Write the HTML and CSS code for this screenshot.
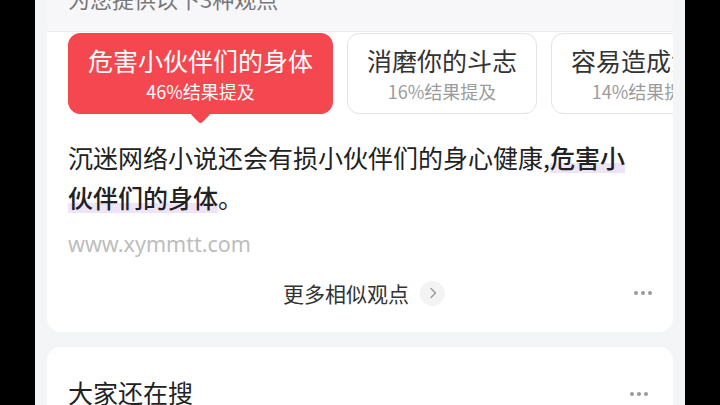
FILE: index.html
```html
<!DOCTYPE html>
<html lang="zh-CN">
<head>
    <meta charset="UTF-8">
    <meta name="viewport" content="width=device-width, initial-scale=1.0">
    <title>观点</title>
    <link rel="stylesheet" href="styles.css">
</head>
<body>
    <div class="phone">
        <div class="card answer">
            <div class="card-head">为您提供以下3种观点</div>
            <div class="tabs">
                <div class="tab active">
                    <div class="tab-title">危害小伙伴们的身体</div>
                    <div class="tab-sub">46%结果提及</div>
                </div>
                <div class="tab">
                    <div class="tab-title">消磨你的斗志</div>
                    <div class="tab-sub">16%结果提及</div>
                </div>
                <div class="tab">
                    <div class="tab-title">容易造成沉迷</div>
                    <div class="tab-sub">14%结果提及</div>
                </div>
            </div>
            <p class="summary">沉迷网络小说还会有损小伙伴们的身心健康,<span class="mark">危害小伙伴们的身体</span>。</p>
            <div class="source">www.xymmtt.com</div>
            <div class="more-row">
                <div class="more">
                    <span>更多相似观点</span>
                    <span class="more-arrow">
                        <svg width="10" height="14" viewBox="0 0 10 14"><path d="M3 2.5 L7.5 7 L3 11.5" fill="none" stroke="#9a9a9a" stroke-width="1.4" stroke-linecap="round" stroke-linejoin="round"/></svg>
                    </span>
                </div>
                <div class="dots"><i></i><i></i><i></i></div>
            </div>
        </div>

        <div class="card related">
            <div class="related-head">
                <h2>大家还在搜</h2>
                <div class="dots"><i></i><i></i><i></i></div>
            </div>
        </div>
    </div>
</body>
</html>
```

FILE: styles.css
```css
body {
    margin: 0;
    background: #000;
    font-family: "Noto Sans CJK SC", "Noto Sans", sans-serif;
    display: flex;
    justify-content: center;
    height: 405px;
    overflow: hidden;
}
.phone {
    width: 650px;
    height: 405px;
    background: #f4f5f7;
    padding: 0 12px;
    box-sizing: border-box;
    display: flex;
    flex-direction: column;
    gap: 15px;
    overflow: hidden;
}
.card {
    background: #fff;
    border-radius: 14px;
    padding: 0 21px;
    flex-shrink: 0;
}
.answer {
    margin-top: -17px;
    border-radius: 0 0 14px 14px;
    padding-bottom: 19px;
    overflow: hidden;
}
.card-head {
    margin: 0 -21px;
    padding: 0 21px;
    height: 49px;
    line-height: 30px;
    font-size: 22px;
    color: #777;
    background: #f7f7f9;
    border-bottom: 1px solid #ececee;
    box-sizing: border-box;
}
.tabs {
    display: flex;
    gap: 14px;
    margin-right: -21px;
    padding-top: 1px;
    padding-bottom: 12px;
    overflow: hidden;
}
.tab {
    position: relative;
    flex-shrink: 0;
    height: 81px;
    padding: 0 19px;
    box-sizing: border-box;
    border: 1px solid #e3e3e5;
    border-radius: 12px;
    display: flex;
    flex-direction: column;
    align-items: center;
    justify-content: center;
    gap: 3px;
}
.tab-title {
    font-size: 25px;
    line-height: 32px;
    color: #333;
}
.tab-sub {
    font-size: 18px;
    line-height: 24px;
    color: #9c9c9c;
}
.tab.active {
    background: #f5474f;
    border-color: #f5474f;
}
.tab.active .tab-title,
.tab.active .tab-sub {
    color: #fff;
}
.tab.active::after {
    content: "";
    position: absolute;
    left: 50%;
    bottom: -8px;
    width: 15px;
    height: 15px;
    margin-left: -8px;
    background: #f5474f;
    border-radius: 3px;
    transform: rotate(45deg);
}
.summary {
    margin: 11px 0 0;
    width: 570px;
    font-size: 25px;
    line-height: 40px;
    color: #222;
}
.mark {
    font-weight: 500;
    background: linear-gradient(transparent 66%, #ede4f8 66%, #ede4f8 94%, transparent 94%);
}
.source {
    margin-top: 12px;
    font-family: "Noto Sans", sans-serif;
    font-size: 21.5px;
    line-height: 30px;
    color: #bdbdbd;
}
.more-row {
    margin-top: 14px;
    height: 40px;
    display: grid;
    grid-template-columns: 1fr auto 1fr;
    align-items: center;
}
.more {
    grid-column: 2;
    display: flex;
    align-items: center;
    gap: 11px;
    padding-left: 8px;
    font-size: 21px;
    color: #333;
}
.more-arrow {
    width: 25px;
    height: 25px;
    border-radius: 50%;
    background: #f3f3f4;
    display: flex;
    align-items: center;
    justify-content: center;
}
.dots {
    justify-self: end;
    display: flex;
    gap: 3px;
}
.dots i {
    width: 4px;
    height: 4px;
    border-radius: 50%;
    background: #9a9a9a;
}
.related {
    height: 80px;
    border-radius: 14px 14px 0 0;
}
.related-head {
    padding-top: 28px;
    display: flex;
    justify-content: space-between;
    align-items: center;
}
.related-head h2 {
    margin: 0;
    font-size: 25px;
    line-height: 34px;
    font-weight: 400;
    color: #222;
}
.related-head .dots {
    margin-right: 4px;
    padding-top: 4px;
}
```
